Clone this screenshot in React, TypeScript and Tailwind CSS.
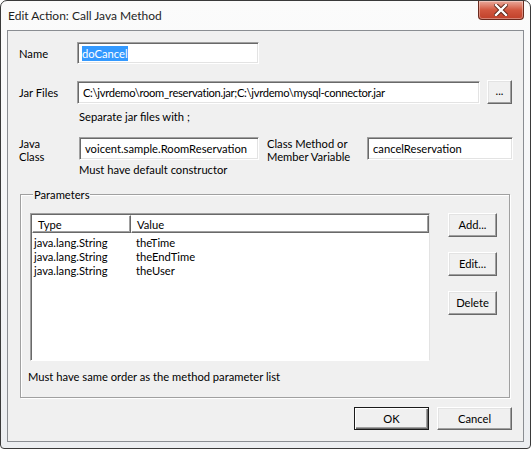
const font = "font-['Lato',sans-serif]";

const Field = ({ className = "", children }: { className?: string; children?: React.ReactNode }) => (
  <div
    className={`flex items-center overflow-hidden whitespace-nowrap border border-t-[#a0a0a0] border-l-[#a0a0a0] border-b-white border-r-white bg-white pl-[4px] shadow-[inset_1px_1px_0_#696969,inset_-1px_-1px_0_#e3e3e3] ${className}`}
  >
    {children}
  </div>
);

const Button = ({ className = "", children, isDefault = false }: { className?: string; children: React.ReactNode; isDefault?: boolean }) => (
  <button
    className={`flex items-center justify-center bg-[#f0f0f0] leading-none text-black ${
      isDefault
        ? "border border-[#1a1a1a] shadow-[inset_1px_1px_0_#ffffff,inset_-1px_-1px_0_#696969,inset_-2px_-2px_0_#a0a0a0]"
        : "border border-t-white border-l-white border-b-[#696969] border-r-[#696969] shadow-[inset_-1px_-1px_0_#a0a0a0,inset_1px_1px_0_#e3e3e3]"
    } ${className}`}
  >
    {children}
  </button>
);

const HeaderCell = ({ className = "", children }: { className?: string; children?: React.ReactNode }) => (
  <div
    className={`flex h-full items-center border border-t-white border-l-white border-b-[#696969] border-r-[#696969] pl-[5px] shadow-[inset_-1px_-1px_0_#a0a0a0] ${className}`}
  >
    {children}
  </div>
);

const rows = [
  ["java.lang.String", "theTime"],
  ["java.lang.String", "theEndTime"],
  ["java.lang.String", "theUser"],
];

export default function App() {
  return (
    <div className={`${font} text-[11.2px] leading-[15px] text-black`}>
      <div className="flex h-[449px] w-[531px] flex-col rounded-t-[7px] rounded-b-[4px] border border-[#3a3a3a] bg-gradient-to-b from-[#fbfbfb] via-[#f4f5f7] to-[#eceef1] px-[6px] pb-[6px]">
        {/* Title bar */}
        <div className="flex h-[29px] items-start justify-between">
          <span className="pl-[1px] pt-[7px] text-[12px] text-[#1e1e1e]">Edit Action: Call Java Method</span>
          <div className="flex h-[19px] w-[46px] items-center justify-center rounded-b-[4px] border border-t-0 border-[#6a2a1e] bg-gradient-to-b from-[#e9a99b] via-[#d2573f] to-[#c0402a] shadow-[inset_0_0_0_1px_rgba(255,255,255,0.35)]">
            <svg width="14" height="12" viewBox="0 0 14 12">
              <path d="M2 1 L12 11 M12 1 L2 11" stroke="#5a2418" strokeWidth="4.2" strokeLinecap="square" />
              <path d="M2 1 L12 11 M12 1 L2 11" stroke="#ffffff" strokeWidth="2.4" strokeLinecap="square" />
            </svg>
          </div>
        </div>

        {/* Client area */}
        <div className="flex flex-1 flex-col border border-[#8a8d92] bg-[#f0f0f0] pl-[11px] pr-[11px] pt-[11px]">
          {/* Name */}
          <div className="flex items-center">
            <span className="w-[58px]">Name</span>
            <Field className="h-[22px] w-[182px]">
              <span className="bg-[#3399ff] text-white">doCancel</span>
            </Field>
          </div>

          {/* Jar files */}
          <div className="mt-[16px] flex items-center">
            <span className="w-[58px]">Jar Files</span>
            <Field className="h-[23px] w-[404px] pl-[5px] tracking-[-0.3px]">C:\jvrdemo\room_reservation.jar;C:\jvrdemo\mysql-connector.jar</Field>
            <Button className="ml-[7px] h-[24px] w-[25px] pb-[3px]">...</Button>
          </div>
          <span className="ml-[60px] mt-[5px]">Separate jar files with ;</span>

          {/* Java class / method */}
          <div className="mt-[13px] flex h-[23px] items-start">
            <span className="w-[60px] shrink-0 whitespace-nowrap leading-[13px]">
              Java
              <br />
              Class
            </span>
            <Field className="h-[23px] w-[180px] shrink-0 pl-[5px]">voicent.sample.RoomReservation</Field>
            <span className="ml-[8px] w-[100px] shrink-0 whitespace-nowrap leading-[13px]">
              Class Method or
              <br />
              Member Variable
            </span>
            <Field className="h-[23px] w-[146px] shrink-0 pl-[5px]">cancelReservation</Field>
          </div>
          <span className="ml-[60px] mt-[2px]">Must have default constructor</span>

          {/* Parameters group */}
          <fieldset className="ml-[1px] mt-[10px] w-[490px] border border-[#a0a0a0] pb-[13px] pl-[7px] pt-[11px] shadow-[1px_1px_0_#ffffff,inset_1px_1px_0_#ffffff]">
            <legend className="ml-[5px] bg-[#f0f0f0] px-[1px]">Parameters</legend>
            <div className="flex items-start">
              <div className="ml-[2px] flex h-[148px] w-[400px] flex-col border border-t-[#a0a0a0] border-l-[#a0a0a0] border-b-white border-r-[#e3e3e3] bg-white shadow-[inset_1px_1px_0_#696969]">
                <div className="ml-px mt-px flex h-[18px] shrink-0">
                  <HeaderCell className="w-[99px]">Type</HeaderCell>
                  <HeaderCell className="flex-1">Value</HeaderCell>
                </div>
                <div className="pt-[2px]">
                  {rows.map(([type, value]) => (
                    <div key={value} className="flex h-[14px] items-center">
                      <span className="w-[105px] pl-[3px]">{type}</span>
                      <span>{value}</span>
                    </div>
                  ))}
                </div>
              </div>
              <div className="ml-[18px] flex flex-col gap-[15px]">
                <Button className="h-[24px] w-[49px]">Add...</Button>
                <Button className="h-[24px] w-[49px]">Edit...</Button>
                <Button className="h-[24px] w-[49px]">Delete</Button>
              </div>
            </div>
            <p className="mt-[8px]">Must have same order as the method parameter list</p>
          </fieldset>

          {/* Dialog buttons */}
          <div className="mt-[9px] flex justify-end gap-[8px]">
            <Button isDefault className="h-[23px] w-[75px]">OK</Button>
            <Button className="h-[23px] w-[75px]">Cancel</Button>
          </div>
        </div>
      </div>
    </div>
  );
}
